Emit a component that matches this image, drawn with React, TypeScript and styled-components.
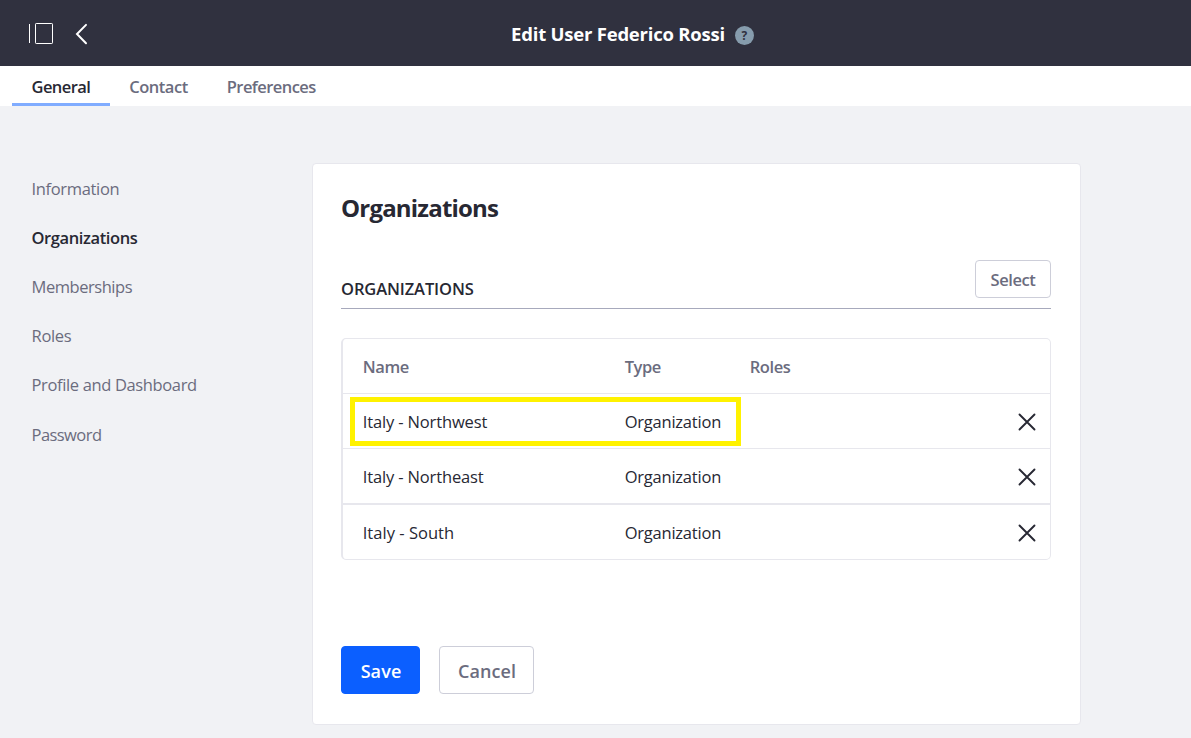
import React from 'react';
import styled, { createGlobalStyle } from 'styled-components';

const GlobalStyle = createGlobalStyle`
  *, *::before, *::after { box-sizing: border-box; }
  body {
    margin: 0;
    background: #f1f2f5;
    color: #272833;
    font-family: 'Segoe UI', 'Open Sans', 'Noto Sans', sans-serif;
    font-size: 16.5px;
  }
  button { font: inherit; cursor: pointer; }
  ul { margin: 0; padding: 0; list-style: none; }
`;

const Page = styled.div`
  display: flex;
  flex-direction: column;
  height: 738px;
  overflow: hidden;
`;

const ControlMenu = styled.header`
  display: grid;
  grid-template-columns: 200px 1fr 126px;
  align-items: center;
  height: 66px;
  background: #30313f;
  color: #fff;
`;

const ControlIcons = styled.div`
  display: flex;
  align-items: center;
  gap: 20px;
  padding: 1px 0 0 28px;
`;

const PageTitle = styled.h1`
  display: flex;
  align-items: center;
  justify-content: center;
  gap: 10px;
  margin: 0;
  padding-top: 4px;
  font-size: 18.5px;
  font-weight: 700;
  line-height: 26px;
  letter-spacing: -0.22px;
  white-space: nowrap;
`;

const TitleText = styled.span`
  position: relative;
  top: -1px;
`;

const Help = styled.span`
  display: flex;
  align-items: center;
  justify-content: center;
  width: 19px;
  height: 19px;
  border-radius: 50%;
  background: #869cad;
  color: #30313f;
  font-size: 12px;
  font-weight: 700;
  line-height: 19px;
  letter-spacing: 0;
`;

const Tabs = styled.nav`
  display: flex;
  height: 40px;
  padding-left: 12px;
  background: #fff;
`;

const Tab = styled.a<{ $active?: boolean; $tracking: number }>`
  padding: 2px 19.5px 0 19.5px;
  border-bottom: 3px solid ${(p) => (p.$active ? '#80acff' : 'transparent')};
  color: ${(p) => (p.$active ? '#272833' : '#6b6c7e')};
  font-weight: 600;
  line-height: 38px;
  letter-spacing: ${(p) => p.$tracking}px;
`;

const Content = styled.div`
  display: flex;
  align-items: flex-start;
  padding-top: 57px;
`;

const SideNav = styled.ul`
  width: 312px;
  padding: 0.7px 0 0 31.5px;
`;

const SideItem = styled.li<{ $active?: boolean; $tracking: number }>`
  height: 49.2px;
  line-height: 49.2px;
  color: ${(p) => (p.$active ? '#272833' : '#6b6c7e')};
  font-weight: ${(p) => (p.$active ? 600 : 400)};
  letter-spacing: ${(p) => p.$tracking}px;
`;

const Sheet = styled.main`
  width: 769px;
  height: 562px;
  padding: 28px 29px 0 28px;
  border: 1px solid #e7e7ed;
  border-radius: 4px;
  background: #fff;
`;

const SheetTitle = styled.h2`
  margin: 0;
  font-size: 24px;
  font-weight: 700;
  line-height: 32px;
  letter-spacing: -0.81px;
`;

const SectionHeader = styled.div`
  display: flex;
  align-items: flex-end;
  justify-content: space-between;
  height: 85px;
  padding-bottom: 10px;
  border-bottom: 1px solid #a7a9bc;
`;

const SectionTitle = styled.h3`
  margin: 0 0 -3px;
  font-size: 16.5px;
  font-weight: 600;
  line-height: 24px;
  letter-spacing: -0.11px;
`;

const Button = styled.button<{ $primary?: boolean; $large?: boolean; $width: number }>`
  width: ${(p) => p.$width}px;
  height: ${(p) => (p.$large ? 48 : 38)}px;
  padding: ${(p) => (p.$large ? '2px 0 0 1px' : '0')};
  border: 1px solid ${(p) => (p.$primary ? '#0b5fff' : '#cdced9')};
  border-radius: 4px;
  background: ${(p) => (p.$primary ? '#0b5fff' : '#fff')};
  color: ${(p) => (p.$primary ? '#fff' : '#6b6c7e')};
  font-size: ${(p) => (p.$large ? 18 : 16.5)}px;
  font-weight: 600;
  letter-spacing: ${(p) => (p.$large ? 0.1 : -0.4)}px;
`;

const Table = styled.div`
  margin-top: 29px;
  border: 1px solid #e7e7ed;
  border-left-width: 2px;
  border-radius: 5px;
`;

const Row = styled.div<{ $divider?: number }>`
  position: relative;
  display: grid;
  grid-template-columns: 262px 125px 1fr 24px;
  align-items: center;
  height: ${(p) => 54 + (p.$divider ?? 0)}px;
  padding: 0 10.3px 0 19.7px;
  border-top: ${(p) => p.$divider ?? 0}px solid #e7e7ed;
`;

const Cell = styled.span<{ $tracking: number }>`
  padding-top: 1px;
  letter-spacing: ${(p) => p.$tracking}px;
  white-space: nowrap;
`;

const HeadCell = styled(Cell)`
  color: #6b6c7e;
  font-weight: 600;
`;

const RemoveButton = styled.button`
  display: flex;
  grid-column: 4;
  padding: 1.4px 0 0;
  margin-left: 1.3px;
  border: 0;
  background: none;
  color: #272833;
`;

const Highlight = styled.span`
  position: absolute;
  top: 3px;
  left: 7px;
  width: 391px;
  height: 49px;
  border: 5px solid #fff200;
`;

const Actions = styled.div`
  display: flex;
  gap: 19px;
  margin-top: 86px;
`;

const tabs = [
  { label: 'General', tracking: -0.58 },
  { label: 'Contact', tracking: -0.47 },
  { label: 'Preferences', tracking: -0.56 },
];

const sections = [
  { label: 'Information', tracking: -0.34 },
  { label: 'Organizations', tracking: -0.4 },
  { label: 'Memberships', tracking: -0.45 },
  { label: 'Roles', tracking: -0.3 },
  { label: 'Profile and Dashboard', tracking: -0.36 },
  { label: 'Password', tracking: -0.55 },
];

const organizations = [
  { name: 'Italy - Northwest', tracking: -0.14, divider: 1, highlighted: true },
  { name: 'Italy - Northeast', tracking: -0.14, divider: 1 },
  { name: 'Italy - South', tracking: 0.03, divider: 2 },
];

const ProductMenuIcon = () => (
  <svg width="27" height="23" viewBox="0 0 27 23" fill="none" stroke="#fff">
    <path d="M1.5 2v19" />
    <rect x="7.5" y="1.5" width="17" height="20" rx="0.7" />
  </svg>
);

const BackIcon = () => (
  <svg width="14" height="22" viewBox="0 0 14 22" fill="none" stroke="#fff" strokeWidth="2">
    <path d="M11 1.9 2 11l9 9.2" strokeLinecap="round" />
  </svg>
);

const CloseIcon = () => (
  <svg width="20" height="20" viewBox="0 0 20 20" fill="none" stroke="currentColor" strokeWidth="1.9">
    <path d="m2.5 2.5 15 15M17.5 2.5l-15 15" strokeLinecap="round" />
  </svg>
);

export default function App() {
  return (
    <Page>
      <GlobalStyle />
      <ControlMenu>
        <ControlIcons>
          <ProductMenuIcon />
          <BackIcon />
        </ControlIcons>
        <PageTitle>
          <TitleText>Edit User Federico Rossi</TitleText>
          <Help>?</Help>
        </PageTitle>
      </ControlMenu>
      <Tabs>
        {tabs.map((t) => (
          <Tab key={t.label} $active={t.label === 'General'} $tracking={t.tracking}>
            {t.label}
          </Tab>
        ))}
      </Tabs>
      <Content>
        <SideNav>
          {sections.map((s) => (
            <SideItem key={s.label} $active={s.label === 'Organizations'} $tracking={s.tracking}>
              {s.label}
            </SideItem>
          ))}
        </SideNav>
        <Sheet>
          <SheetTitle>Organizations</SheetTitle>
          <SectionHeader>
            <SectionTitle>ORGANIZATIONS</SectionTitle>
            <Button $width={76}>Select</Button>
          </SectionHeader>
          <Table>
            <Row>
              <HeadCell $tracking={-0.35}>Name</HeadCell>
              <HeadCell $tracking={-0.47}>Type</HeadCell>
              <HeadCell $tracking={-0.4}>Roles</HeadCell>
            </Row>
            {organizations.map((o) => (
              <Row key={o.name} $divider={o.divider}>
                <Cell $tracking={o.tracking}>{o.name}</Cell>
                <Cell $tracking={-0.22}>Organization</Cell>
                <RemoveButton aria-label="Remove">
                  <CloseIcon />
                </RemoveButton>
                {o.highlighted && <Highlight />}
              </Row>
            ))}
          </Table>
          <Actions>
            <Button $primary $large $width={79}>Save</Button>
            <Button $large $width={95}>Cancel</Button>
          </Actions>
        </Sheet>
      </Content>
    </Page>
  );
}
